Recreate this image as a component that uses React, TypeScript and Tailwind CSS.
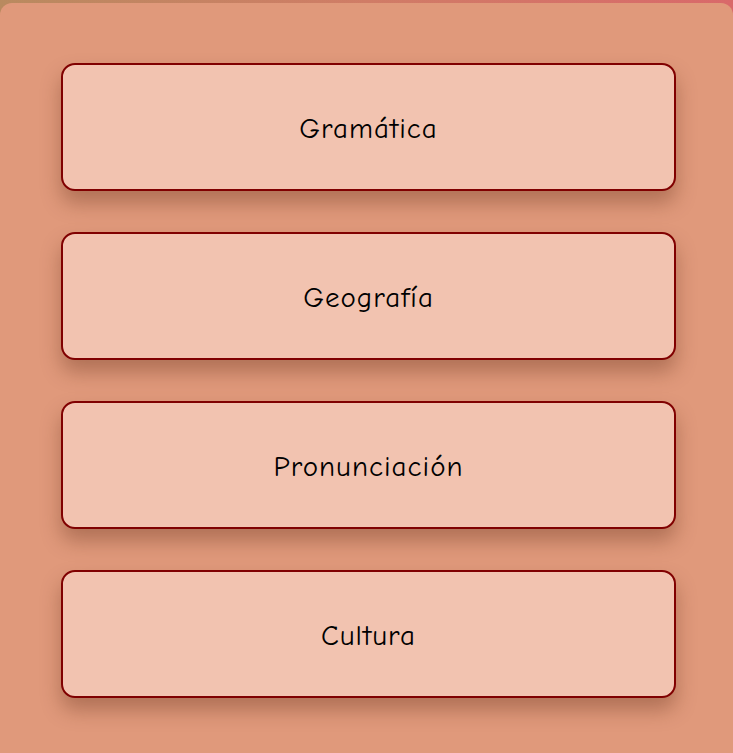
export default function App() {
  const topics = ["Gramática", "Geografía", "Pronunciación", "Cultura"];

  return (
    <div className="min-h-[753px] bg-gradient-to-r from-[#b98a5f] via-[#d07c66] to-[#d9696a] pt-[3px] overflow-hidden">
      <div
        className="min-h-[750px] rounded-t-xl bg-[#e0997b] pl-[61px] pt-[60px] pb-10 flex flex-col gap-[41px]"
        style={{ fontFamily: '"Comic Sans MS", "Comic Neue", cursive, sans-serif' }}
      >
        {topics.map((t) => (
          <button
            key={t}
            className="h-[128px] w-[615px] rounded-[14px] border-2 border-[#800000] bg-[#f2c3b0] pt-[4px] text-[29px] tracking-[0.035em] text-black shadow-[0_12px_20px_rgba(90,40,20,0.35)] flex items-center justify-center"
          >
            {t}
          </button>
        ))}
      </div>
    </div>
  );
}
